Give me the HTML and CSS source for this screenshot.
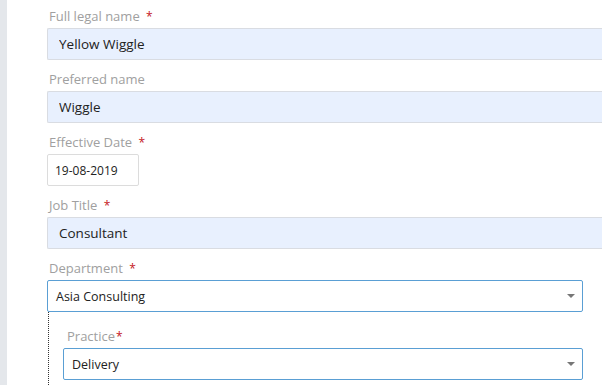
FILE: index.html
```html
<!DOCTYPE html>
<html lang="en">
<head>
    <meta charset="UTF-8">
    <meta name="viewport" content="width=device-width, initial-scale=1.0">
    <title>Employee Details</title>
    <link rel="stylesheet" href="styles.css">
</head>
<body>
    <div class="sidebar"></div>
    <form class="form" id="employeeForm">
        <div class="field">
            <label for="legalName">Full legal name <span class="req">*</span></label>
            <input type="text" class="text-input" id="legalName" value="Yellow Wiggle">
        </div>

        <div class="field">
            <label for="preferredName">Preferred name</label>
            <input type="text" class="text-input" id="preferredName" value="Wiggle">
        </div>

        <div class="field">
            <label for="effectiveDate">Effective Date <span class="req">*</span></label>
            <input type="text" class="date-input" id="effectiveDate" value="19-08-2019">
        </div>

        <div class="field">
            <label for="jobTitle">Job Title <span class="req">*</span></label>
            <input type="text" class="text-input" id="jobTitle" value="Consultant">
        </div>

        <div class="field last">
            <label>Department <span class="req">*</span></label>
            <div class="select">
                <span>Asia Consulting</span>
                <svg class="caret" width="8" height="4" viewBox="0 0 8 4"><path d="M0 0h8L4 4z"/></svg>
            </div>
        </div>

        <div class="sub-fields">
            <div class="field">
                <label>Practice<span class="req">*</span></label>
                <div class="select">
                    <span>Delivery</span>
                    <svg class="caret" width="8" height="4" viewBox="0 0 8 4"><path d="M0 0h8L4 4z"/></svg>
                </div>
            </div>
        </div>
    </form>
</body>
</html>
```

FILE: styles.css
```css
html, body {
    margin: 0;
    height: 100%;
    overflow: hidden;
}
body {
    display: flex;
    background-color: #fff;
    font-family: "Open Sans", "Noto Sans", Arial, sans-serif;
    color: #222;
}
.sidebar {
    width: 7px;
    flex-shrink: 0;
    background-color: #e4e7eb;
}
.form {
    flex: 1;
    padding: 8px 0 0 40px;
    min-width: 0;
}
.field {
    margin-bottom: 11px;
}
.field.last {
    margin-bottom: 0;
}
label {
    display: block;
    height: 16px;
    line-height: 16px;
    margin-bottom: 4px;
    padding-left: 2px;
    font-size: 13px;
    color: #a0a0a0;
    white-space: nowrap;
}
.req {
    color: #c4161c;
    font-size: 12px;
    margin-left: 3px;
}
.text-input, .date-input {
    display: block;
    height: 32px;
    margin: 0;
    padding: 0 11px;
    border: 1px solid #d9dce2;
    border-radius: 2px;
    box-sizing: border-box;
    font-family: inherit;
    color: #222;
    outline: none;
}
.text-input {
    width: 555px;
    border-right: 0;
    border-radius: 2px 0 0 2px;
    font-size: 13.5px;
    background-color: #e8f0fe;
}
.date-input {
    width: 92px;
    padding: 0 7px;
    font-size: 12px;
    background-color: #fff;
    border-color: #dcdcdc;
}
.select {
    display: flex;
    align-items: center;
    justify-content: space-between;
    width: 536px;
    height: 32px;
    padding: 0 7px 0 8px;
    border: 1px solid #5a9fd4;
    border-radius: 2px;
    box-sizing: border-box;
    font-size: 12.5px;
    background-color: #fff;
}
.caret {
    fill: #777;
}
.sub-fields {
    height: 73px;
    box-sizing: border-box;
    margin-left: 1px;
    padding: 16px 0 0 14px;
    border-left: 1px dotted #333;
}
.sub-fields label {
    padding-left: 4px;
}
.sub-fields .req {
    margin-left: 1px;
}
.sub-fields .field {
    margin-bottom: 0;
}
.sub-fields .select {
    width: 520px;
}
```
